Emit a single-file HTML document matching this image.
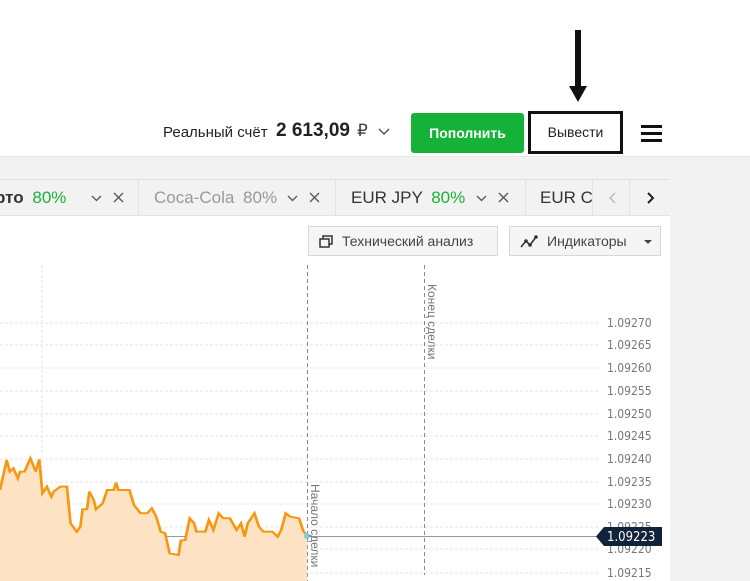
<!DOCTYPE html>
<html><head><meta charset="utf-8"><style>
*{margin:0;padding:0;box-sizing:border-box}
body{width:750px;height:581px;overflow:hidden;background:#f2f2f2;font-family:"Liberation Sans",sans-serif;position:relative;color:#333}
.abs{position:absolute}
#top{left:0;top:0;width:750px;height:157px;background:#fff;border-bottom:1px solid #e6e6e6}
.tabs{left:0;top:179px;width:670px;height:37px;background:#f2f2f2;border-top:1px solid #e2e2e2;border-bottom:1px solid #e2e2e2}
.tab{position:absolute;top:0;height:35px;border-right:1px solid #e2e2e2;font-size:17px;line-height:35px;white-space:nowrap;overflow:hidden}
.g{color:#19b336}
.chart{left:0;top:216px;width:670px;height:365px;background:#fff}
.btn{position:absolute;top:226px;height:30px;border:1px solid #d8d8d8;background:#f5f5f5;font-size:14px;line-height:28px;color:#444}
.yl{position:absolute;left:607px;font-size:12px;color:#777;font-family:"DejaVu Sans Condensed","Liberation Sans",sans-serif}
</style></head><body>
<div id="top" class="abs"></div>
<div class="abs" style="left:575px;top:30px;width:6px;height:57px;background:#111"></div>
<div class="abs" style="left:569px;top:86px;width:0;height:0;border-left:9px solid transparent;border-right:9px solid transparent;border-top:16px solid #111"></div>
<div class="abs" style="left:163px;top:124px;font-size:15px;color:#222">Реальный счёт</div>
<div class="abs" style="left:276px;top:120px;font-size:19px;font-weight:bold;color:#222">2 613,09</div>
<div class="abs" style="left:357px;top:121px;font-size:17px;color:#444">₽</div>
<svg class="abs" style="left:378px;top:128px" width="12" height="8"><path d="M1 1l5 5 5-5" stroke="#444" fill="none" stroke-width="1.3"/></svg>
<div class="abs" style="left:411px;top:113px;width:113px;height:40px;background:#14b236;border-radius:3px;color:#fff;font-weight:bold;font-size:14px;text-align:center;line-height:40px">Пополнить</div>
<div class="abs" style="left:528px;top:111px;width:95px;height:43px;border:3px solid #111;background:#fff;color:#222;font-size:14px;text-align:center;line-height:37px">Вывести</div>
<div class="abs" style="left:641px;top:125px;width:21px;height:3px;background:#111"></div>
<div class="abs" style="left:641px;top:132px;width:21px;height:3px;background:#111"></div>
<div class="abs" style="left:641px;top:139px;width:21px;height:3px;background:#111"></div>

<div class="abs tabs">
<div class="tab" style="left:0;width:139px;font-weight:bold;color:#333"><span style="margin-left:-5px">рто</span> <span class="g" style="font-weight:normal;margin-left:4px">80%</span>
<svg class="abs" style="left:91px;top:15px" width="11" height="7"><path d="M1 1l4.5 4.5L10 1" stroke="#555" fill="none" stroke-width="1.3"/></svg>
<svg class="abs" style="left:113px;top:12px" width="11" height="11"><path d="M1 1l9 9M10 1l-9 9" stroke="#555" stroke-width="1.3"/></svg></div>
<div class="tab" style="left:139px;width:197px;color:#999;padding-left:15px">Coca-Cola <span style="margin-left:4px">80%</span>
<svg class="abs" style="left:148px;top:15px" width="11" height="7"><path d="M1 1l4.5 4.5L10 1" stroke="#555" fill="none" stroke-width="1.3"/></svg>
<svg class="abs" style="left:170px;top:12px" width="11" height="11"><path d="M1 1l9 9M10 1l-9 9" stroke="#555" stroke-width="1.3"/></svg></div>
<div class="tab" style="left:336px;width:190px;color:#333;padding-left:15px">EUR JPY <span class="g" style="margin-left:4px">80%</span>
<svg class="abs" style="left:140px;top:15px" width="11" height="7"><path d="M1 1l4.5 4.5L10 1" stroke="#555" fill="none" stroke-width="1.3"/></svg>
<svg class="abs" style="left:162px;top:12px" width="11" height="11"><path d="M1 1l9 9M10 1l-9 9" stroke="#555" stroke-width="1.3"/></svg></div>
<div class="tab" style="left:526px;width:67px;color:#333;padding-left:14px">EUR CHF</div>
<div class="tab" style="left:593px;width:37px"><svg class="abs" style="left:15px;top:12px" width="8" height="12"><path d="M7 1L2 6l5 5" stroke="#bbb" fill="none" stroke-width="1.5"/></svg></div>
<div class="tab" style="left:630px;width:40px;border-right:none"><svg class="abs" style="left:17px;top:12px" width="8" height="12"><path d="M1 1l5 5-5 5" stroke="#222" fill="none" stroke-width="2"/></svg></div>
</div>

<div class="abs chart"></div>
<div class="btn" style="left:308px;width:190px;padding-left:33px">Технический анализ
<svg class="abs" style="left:10px;top:8px" width="14" height="13"><rect x="4" y="1" width="9" height="8" fill="none" stroke="#333" stroke-width="1.5"/><rect x="1" y="4" width="9" height="8" fill="#f5f5f5" stroke="#333" stroke-width="1.5"/></svg></div>
<div class="btn" style="left:509px;width:152px;padding-left:37px">Индикаторы
<svg class="abs" style="left:10px;top:8px" width="18" height="13"><path d="M1 12l5-6 4 4 6-8" stroke="#333" fill="none" stroke-width="1.6"/><circle cx="6" cy="6" r="1.8" fill="#333"/><circle cx="10" cy="10" r="1.8" fill="#333"/><circle cx="16" cy="2" r="1.8" fill="#333"/></svg>
<div class="abs" style="left:134px;top:13px;border-left:4px solid transparent;border-right:4px solid transparent;border-top:4px solid #444"></div></div>

<svg class="abs" style="left:0;top:260px" width="670" height="321">
<g stroke="#e4e4e4" stroke-dasharray="3,2" stroke-width="1">
<line x1="0" y1="63" x2="600" y2="63"/><line x1="0" y1="85" x2="600" y2="85"/><line x1="0" y1="108" x2="600" y2="108"/><line x1="0" y1="131" x2="600" y2="131"/><line x1="0" y1="154" x2="600" y2="154"/><line x1="0" y1="176" x2="600" y2="176"/><line x1="0" y1="199" x2="600" y2="199"/><line x1="0" y1="222" x2="600" y2="222"/><line x1="0" y1="244" x2="600" y2="244"/><line x1="0" y1="267" x2="600" y2="267"/><line x1="0" y1="289" x2="600" y2="289"/><line x1="0" y1="313" x2="600" y2="313"/>
<line x1="42" y1="5" x2="42" y2="321"/>
</g>
<g stroke="#888" stroke-dasharray="4,3"><line x1="307.5" y1="5" x2="307.5" y2="321"/><line x1="424.5" y1="5" x2="424.5" y2="315"/></g>
<line x1="0" y1="276.5" x2="600" y2="276.5" stroke="#8a9aa8" stroke-width="1"/>
<g transform="scale(0.4464,0.3333)">
<path d="M0 690L15 600L22 635L30 625L40 655L45 635L55 635L68 595L80 635L88 598L95 700L105 680L115 710L120 695L135 680L150 680L158 790L172 815L180 800L185 748L195 748L200 695L210 720L215 748L230 730L240 690L255 690L260 668L265 690L290 690L300 735L315 760L330 760L340 745L350 770L360 815L370 820L380 880L400 885L405 842L415 840L425 775L435 790L440 815L460 815L468 780L478 810L490 760L500 775L515 775L530 810L540 790L548 830L555 790L570 760L580 800L590 815L610 815L622 830L630 810L640 760L650 770L670 775L680 815L688 825L688 963L0 963Z" fill="#fde3c4"/>
<path d="M0 690L15 600L22 635L30 625L40 655L45 635L55 635L68 595L80 635L88 598L95 700L105 680L115 710L120 695L135 680L150 680L158 790L172 815L180 800L185 748L195 748L200 695L210 720L215 748L230 730L240 690L255 690L260 668L265 690L290 690L300 735L315 760L330 760L340 745L350 770L360 815L370 820L380 880L400 885L405 842L415 840L425 775L435 790L440 815L460 815L468 780L478 810L490 760L500 775L515 775L530 810L540 790L548 830L555 790L570 760L580 800L590 815L610 815L622 830L630 810L640 760L650 770L670 775L680 815L688 825" fill="none" stroke="#f7960f" stroke-width="6"/>
</g>
<circle cx="307" cy="276" r="3" fill="#7cc8e8"/>
<text transform="translate(428,24) rotate(90)" font-size="12" fill="#777" font-family="Liberation Sans">Конец сделки</text>
<text transform="translate(311,224) rotate(90)" font-size="12" fill="#777" font-family="Liberation Sans">Начало сделки</text>
</svg>
<div class="yl" style="top:316px">1.09270</div>
<div class="yl" style="top:338px">1.09265</div>
<div class="yl" style="top:361px">1.09260</div>
<div class="yl" style="top:384px">1.09255</div>
<div class="yl" style="top:407px">1.09250</div>
<div class="yl" style="top:429px">1.09245</div>
<div class="yl" style="top:452px">1.09240</div>
<div class="yl" style="top:475px">1.09235</div>
<div class="yl" style="top:497px">1.09230</div>
<div class="yl" style="top:520px">1.09225</div>
<div class="yl" style="top:542px">1.09220</div>
<div class="yl" style="top:566px">1.09215</div>
<svg class="abs" style="left:596px;top:527px" width="68" height="20"><path d="M8 0H66V19H8L0 9.5Z" fill="#10233a"/><text x="11" y="14" font-size="13" fill="#fff" font-family="DejaVu Sans Condensed,Liberation Sans">1.09223</text></svg>
</body></html>
